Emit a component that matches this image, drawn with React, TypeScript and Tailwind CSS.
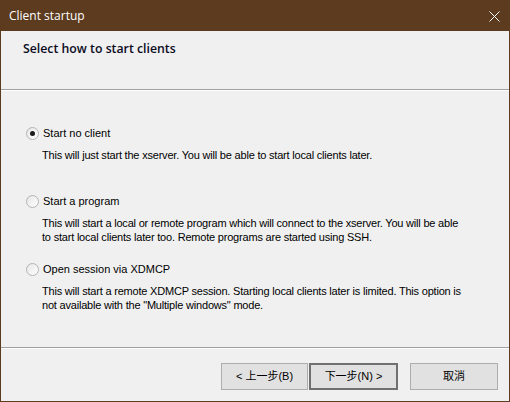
import React from 'react'

const options = [
  {
    label: 'Start no client',
    checked: true,
    lines: ['This will just start the xserver. You will be able to start local clients later.'],
  },
  {
    label: 'Start a program',
    checked: false,
    lines: [
      'This will start a local or remote program which will connect to the xserver. You will be able',
      'to start local clients later too. Remote programs are started using SSH.',
    ],
  },
  {
    label: 'Open session via XDMCP',
    checked: false,
    lines: [
      'This will start a remote XDMCP session. Starting local clients later is limited. This option is',
      'not available with the "Multiple windows" mode.',
    ],
  },
]

const Radio: React.FC<{ checked: boolean }> = ({ checked }) => (
  <span className="w-[13px] h-[13px] rounded-full border border-[#b4b4b4] bg-gradient-to-br from-[#e6e6e6] to-white flex items-center justify-center shrink-0">
    {checked && <span className="w-[5px] h-[5px] rounded-full bg-[#1a1a1a]" />}
  </span>
)

const App: React.FC = () => {
  return (
    <div className="w-[510px] h-[402px] bg-[#f0f0f0] border border-[#5c3b1e] flex flex-col font-['Liberation_Sans',Arial,sans-serif] text-black">
      {/* Title bar */}
      <div className="h-[30px] bg-[#5c3b1e] flex items-center justify-between pl-[8px] pr-[9px] shrink-0">
        <span className="text-white text-[12px] font-['Open_Sans','Noto_Sans',sans-serif]">Client startup</span>
        <svg width="11" height="11" viewBox="0 0 11 11" className="text-white">
          <path d="M0.5 0.5 L10.5 10.5 M10.5 0.5 L0.5 10.5" stroke="currentColor" strokeWidth="1" />
        </svg>
      </div>

      {/* Header */}
      <div className="h-[58px] shrink-0 pl-[22px] pt-[5px]">
        <span className="text-[12.3px] font-semibold text-[#0a0a1e] font-['Open_Sans','Noto_Sans',sans-serif]">
          Select how to start clients
        </span>
      </div>
      <div className="h-px bg-[#a0a0a0] shrink-0" />
      <div className="h-px bg-white shrink-0" />

      {/* Options */}
      <div className="flex-1 flex flex-col pt-[35px] pl-[25px] text-[11px] leading-[14px] gap-[18px]">
        {options.map((opt, i) => (
          <div key={i} className="flex flex-col">
            <div className="flex items-center gap-[4px] h-[14px]">
              <Radio checked={opt.checked} />
              <span>{opt.label}</span>
            </div>
            <div className="pl-[16px] pt-[8px] min-h-[36px] tracking-[-0.2px]">
              {opt.lines.map((l, j) => (
                <div key={j}>{l}</div>
              ))}
            </div>
          </div>
        ))}
      </div>

      <div className="h-px bg-[#a0a0a0] shrink-0" />
      <div className="h-px bg-white shrink-0" />

      {/* Buttons */}
      <div className="h-[52px] shrink-0 flex items-start pt-[14px] pl-[220px] text-[11px] font-['Liberation_Sans','Noto_Sans_CJK_TC',sans-serif]">
        <button className="w-[87px] h-[27px] bg-[#e1e1e1] border border-[#adadad] flex items-center justify-center">
          &lt; 上一步(B)
        </button>
        <button className="ml-[1px] w-[89px] h-[27px] bg-[#e1e1e1] border-2 border-[#707070] flex items-center justify-center">
          下一步(N) &gt;
        </button>
        <button className="ml-[12px] w-[88px] h-[27px] bg-[#e1e1e1] border border-[#adadad] flex items-center justify-center">
          取消
        </button>
      </div>
    </div>
  )
}

export default App
